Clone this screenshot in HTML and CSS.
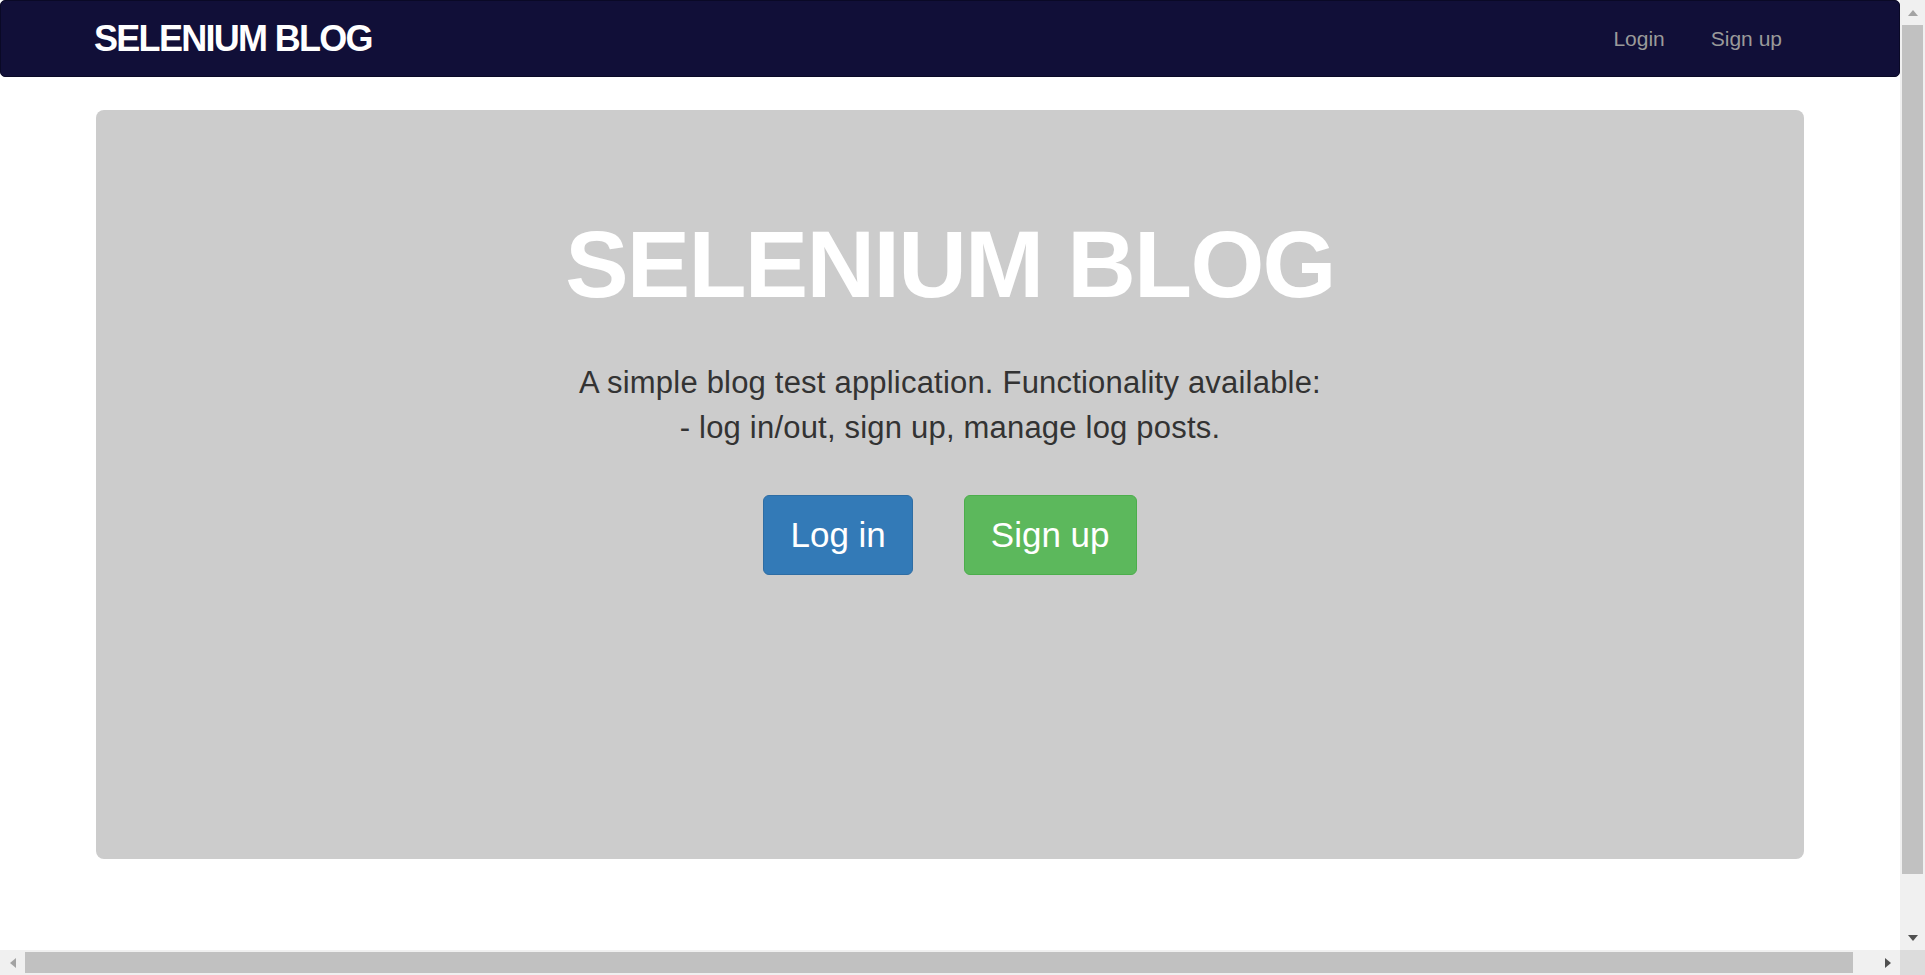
FILE: index.html
```html
<!DOCTYPE html>
<html lang="en">
<head>
<meta charset="utf-8">
<title>Selenium Blog</title>
<link rel="stylesheet" href="styles.css">
</head>
<body>
<div class="page">
  <nav class="navbar">
    <a class="brand" href="#">SELENIUM BLOG</a>
    <ul class="nav-links">
      <li><a href="#">Login</a></li>
      <li><a href="#">Sign up</a></li>
    </ul>
  </nav>
  <section class="jumbotron">
    <h1 class="hero-title">SELENIUM BLOG</h1>
    <p class="hero-text">A simple blog test application. Functionality available:<br>- log in/out, sign up, manage log posts.</p>
    <div class="hero-actions">
      <a class="btn btn-primary" href="#">Log in</a>
      <a class="btn btn-success" href="#">Sign up</a>
    </div>
  </section>
</div>
<div class="scrollbar scrollbar-v" aria-hidden="true">
  <div class="sb-btn"><span class="arrow arrow-up"></span></div>
  <div class="sb-track-v"><div class="sb-thumb-v"></div></div>
  <div class="sb-btn"><span class="arrow arrow-down"></span></div>
</div>
<div class="scrollbar scrollbar-h" aria-hidden="true">
  <div class="sb-btn"><span class="arrow arrow-left"></span></div>
  <div class="sb-track-h"><div class="sb-thumb-h"></div></div>
  <div class="sb-btn"><span class="arrow arrow-right"></span></div>
</div>
<div class="scrollbar-corner" aria-hidden="true"></div>
</body>
</html>
```
FILE: styles.css
```css
body {
  margin: 0;
  background: #ffffff;
  font-family: "Liberation Sans", Arial, sans-serif;
  color: #333333;
}
.page {
  width: 1900px;
}
.navbar {
  box-sizing: border-box;
  height: 77px;
  display: flex;
  align-items: center;
  justify-content: space-between;
  padding: 0 94px 0 93px;
  background: #110f38;
  border: 1px solid #0a0926;
  border-radius: 5px;
}
.brand {
  color: #ffffff;
  text-decoration: none;
  font-weight: bold;
  font-size: 36px;
  letter-spacing: -1.7px;
}
.nav-links {
  display: flex;
  list-style: none;
  margin: 0;
  padding: 0;
}
.nav-links a {
  display: block;
  padding: 0 23px;
  color: #9a9a9a;
  text-decoration: none;
  font-size: 21px;
}
.jumbotron {
  box-sizing: border-box;
  height: 749px;
  margin: 33px 96px 0;
  padding-top: 102px;
  background: #cccccc;
  border-radius: 8px;
  text-align: center;
}
.hero-title {
  margin: 0;
  color: #ffffff;
  font-size: 95px;
  line-height: 1.1;
  font-weight: bold;
  letter-spacing: -1.7px;
}
.hero-text {
  margin: 43px 0 0;
  font-size: 31px;
  line-height: 45px;
  letter-spacing: 0.2px;
  color: #333333;
}
.hero-actions {
  display: flex;
  justify-content: center;
  gap: 51px;
  margin-top: 45px;
}
.btn {
  display: block;
  padding: 16px 26px;
  font-size: 35px;
  line-height: 46px;
  color: #ffffff;
  text-decoration: none;
  border: 1px solid transparent;
  border-radius: 6px;
}
.btn-primary {
  background: #337ab7;
  border-color: #2e6da4;
}
.btn-success {
  background: #5cb85c;
  border-color: #4cae4c;
}

/* Browser scrollbars drawn over the page edge */
.scrollbar {
  position: fixed;
  display: flex;
  background: #f0f0f0;
}
.scrollbar-v {
  top: 0;
  right: 0;
  width: 25px;
  height: 950px;
  flex-direction: column;
}
.scrollbar-h {
  left: 0;
  bottom: 0;
  width: 1900px;
  height: 25px;
  flex-direction: row;
}
.sb-btn {
  flex: 0 0 25px;
  height: 25px;
  display: flex;
  align-items: center;
  justify-content: center;
}
.sb-track-v {
  flex: 1;
  padding: 0 2px;
}
.sb-thumb-v {
  height: 849px;
  background: #c1c1c1;
}
.sb-track-h {
  flex: 1;
  padding: 2px 0;
}
.sb-thumb-h {
  width: 1828px;
  height: 21px;
  background: #c1c1c1;
}
.arrow {
  display: block;
  width: 0;
  height: 0;
}
.arrow-up {
  border-left: 5.5px solid transparent;
  border-right: 5.5px solid transparent;
  border-bottom: 6px solid #a3a3a3;
}
.arrow-down {
  border-left: 5.5px solid transparent;
  border-right: 5.5px solid transparent;
  border-top: 6px solid #505050;
}
.arrow-left {
  border-top: 5.5px solid transparent;
  border-bottom: 5.5px solid transparent;
  border-right: 6px solid #a3a3a3;
}
.arrow-right {
  border-top: 5.5px solid transparent;
  border-bottom: 5.5px solid transparent;
  border-left: 6px solid #505050;
}
.scrollbar-corner {
  position: fixed;
  right: 0;
  bottom: 0;
  width: 25px;
  height: 25px;
  background: #dcdcdc;
}
```
